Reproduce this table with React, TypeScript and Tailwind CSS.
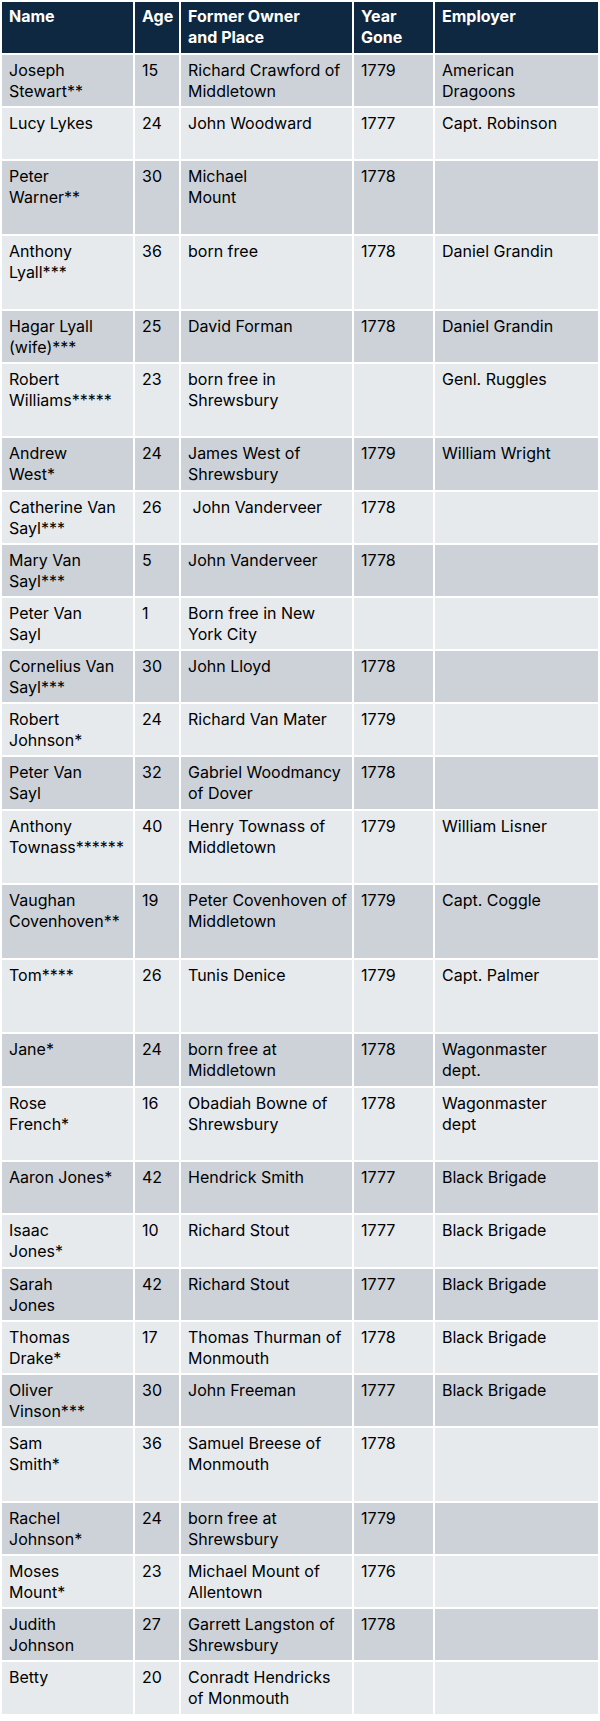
import React from 'react';

interface Person {
  name: string[];
  age: string;
  owner: string[];
  year: string;
  employer: string[];
  tall?: boolean;
}

const people: Person[] = [
  { name: ['Joseph', 'Stewart**'], age: '15', owner: ['Richard Crawford of', 'Middletown'], year: '1779', employer: ['American', 'Dragoons'] },
  { name: ['Lucy Lykes'], age: '24', owner: ['John Woodward'], year: '1777', employer: ['Capt. Robinson'] },
  { name: ['Peter', 'Warner**'], age: '30', owner: ['Michael', 'Mount'], year: '1778', employer: [], tall: true },
  { name: ['Anthony', 'Lyall***'], age: '36', owner: ['born free'], year: '1778', employer: ['Daniel Grandin'], tall: true },
  { name: ['Hagar Lyall', '(wife)***'], age: '25', owner: ['David Forman'], year: '1778', employer: ['Daniel Grandin'] },
  { name: ['Robert', 'Williams*****'], age: '23', owner: ['born free in', 'Shrewsbury'], year: '', employer: ['Genl. Ruggles'], tall: true },
  { name: ['Andrew', 'West*'], age: '24', owner: ['James West of', 'Shrewsbury'], year: '1779', employer: ['William Wright'] },
  { name: ['Catherine Van', 'Sayl***'], age: '26', owner: ['\u00a0John Vanderveer'], year: '1778', employer: [] },
  { name: ['Mary Van', 'Sayl***'], age: '5', owner: ['John Vanderveer'], year: '1778', employer: [] },
  { name: ['Peter Van', 'Sayl'], age: '1', owner: ['Born free in New', 'York City'], year: '', employer: [] },
  { name: ['Cornelius Van', 'Sayl***'], age: '30', owner: ['John Lloyd'], year: '1778', employer: [] },
  { name: ['Robert', 'Johnson*'], age: '24', owner: ['Richard Van Mater'], year: '1779', employer: [] },
  { name: ['Peter Van', 'Sayl'], age: '32', owner: ['Gabriel Woodmancy', 'of Dover'], year: '1778', employer: [] },
  { name: ['Anthony', 'Townass******'], age: '40', owner: ['Henry Townass of', 'Middletown'], year: '1779', employer: ['William Lisner'], tall: true },
  { name: ['Vaughan', 'Covenhoven**'], age: '19', owner: ['Peter Covenhoven of', 'Middletown'], year: '1779', employer: ['Capt. Coggle'], tall: true },
  { name: ['Tom****'], age: '26', owner: ['Tunis Denice'], year: '1779', employer: ['Capt. Palmer'], tall: true },
  { name: ['Jane*'], age: '24', owner: ['born free at', 'Middletown'], year: '1778', employer: ['Wagonmaster', 'dept.'] },
  { name: ['Rose', 'French*'], age: '16', owner: ['Obadiah Bowne of', 'Shrewsbury'], year: '1778', employer: ['Wagonmaster', 'dept'], tall: true },
  { name: ['Aaron Jones*'], age: '42', owner: ['Hendrick Smith'], year: '1777', employer: ['Black Brigade'] },
  { name: ['Isaac', 'Jones*'], age: '10', owner: ['Richard Stout'], year: '1777', employer: ['Black Brigade'] },
  { name: ['Sarah', 'Jones'], age: '42', owner: ['Richard Stout'], year: '1777', employer: ['Black Brigade'] },
  { name: ['Thomas', 'Drake*'], age: '17', owner: ['Thomas Thurman of', 'Monmouth'], year: '1778', employer: ['Black Brigade'] },
  { name: ['Oliver', 'Vinson***'], age: '30', owner: ['John Freeman'], year: '1777', employer: ['Black Brigade'] },
  { name: ['Sam', 'Smith*'], age: '36', owner: ['Samuel Breese of', 'Monmouth'], year: '1778', employer: [], tall: true },
  { name: ['Rachel', 'Johnson*'], age: '24', owner: ['born free at', 'Shrewsbury'], year: '1779', employer: [] },
  { name: ['Moses', 'Mount*'], age: '23', owner: ['Michael Mount of', 'Allentown'], year: '1776', employer: [] },
  { name: ['Judith', 'Johnson'], age: '27', owner: ['Garrett Langston of', 'Shrewsbury'], year: '1778', employer: [] },
  { name: ['Betty'], age: '20', owner: ['Conradt Hendricks', 'of Monmouth'], year: '', employer: [] },
];

function Lines({ lines }: { lines: string[] }) {
  return (
    <>
      {lines.map((line, i) => (
        <span key={i} className="block whitespace-nowrap">
          {line}
        </span>
      ))}
    </>
  );
}

const cell = 'align-top pl-[7px] pr-[3px] pt-[5px]';

export default function App() {
  return (
    <div className="w-[600px] bg-white font-[family-name:Inter,'Liberation_Sans',sans-serif] text-[16px] leading-[21px] text-black">
      <table className="w-[600px] table-fixed border-separate border-spacing-[2px]">
        <colgroup>
          <col className="w-[131px]" />
          <col className="w-[44px]" />
          <col className="w-[171px]" />
          <col className="w-[79px]" />
          <col className="w-[163px]" />
        </colgroup>
        <thead>
          <tr className="h-[51px]">
            {[['Name'], ['Age'], ['Former Owner', 'and Place'], ['Year', 'Gone'], ['Employer']].map((h, i) => (
              <th key={i} className="align-top bg-[#0e2841] pl-[7px] pr-[3px] pt-[4px] text-left font-bold text-white">
                <Lines lines={h} />
              </th>
            ))}
          </tr>
        </thead>
        <tbody>
          {people.map((p, i) => {
            const shade = i % 2 === 0 ? 'bg-[#cdd2d9]' : 'bg-[#e7eaed]';
            return (
              <tr key={i} className={p.tall ? 'h-[72.6px]' : 'h-[51.2px]'}>
                <td className={`${cell} ${shade}`}>
                  <Lines lines={p.name} />
                </td>
                <td className={`${cell} ${shade}`}>{p.age}</td>
                <td className={`${cell} ${shade}`}>
                  <Lines lines={p.owner} />
                </td>
                <td className={`${cell} ${shade}`}>{p.year}</td>
                <td className={`${cell} ${shade}`}>
                  <Lines lines={p.employer} />
                </td>
              </tr>
            );
          })}
        </tbody>
      </table>
    </div>
  );
}
